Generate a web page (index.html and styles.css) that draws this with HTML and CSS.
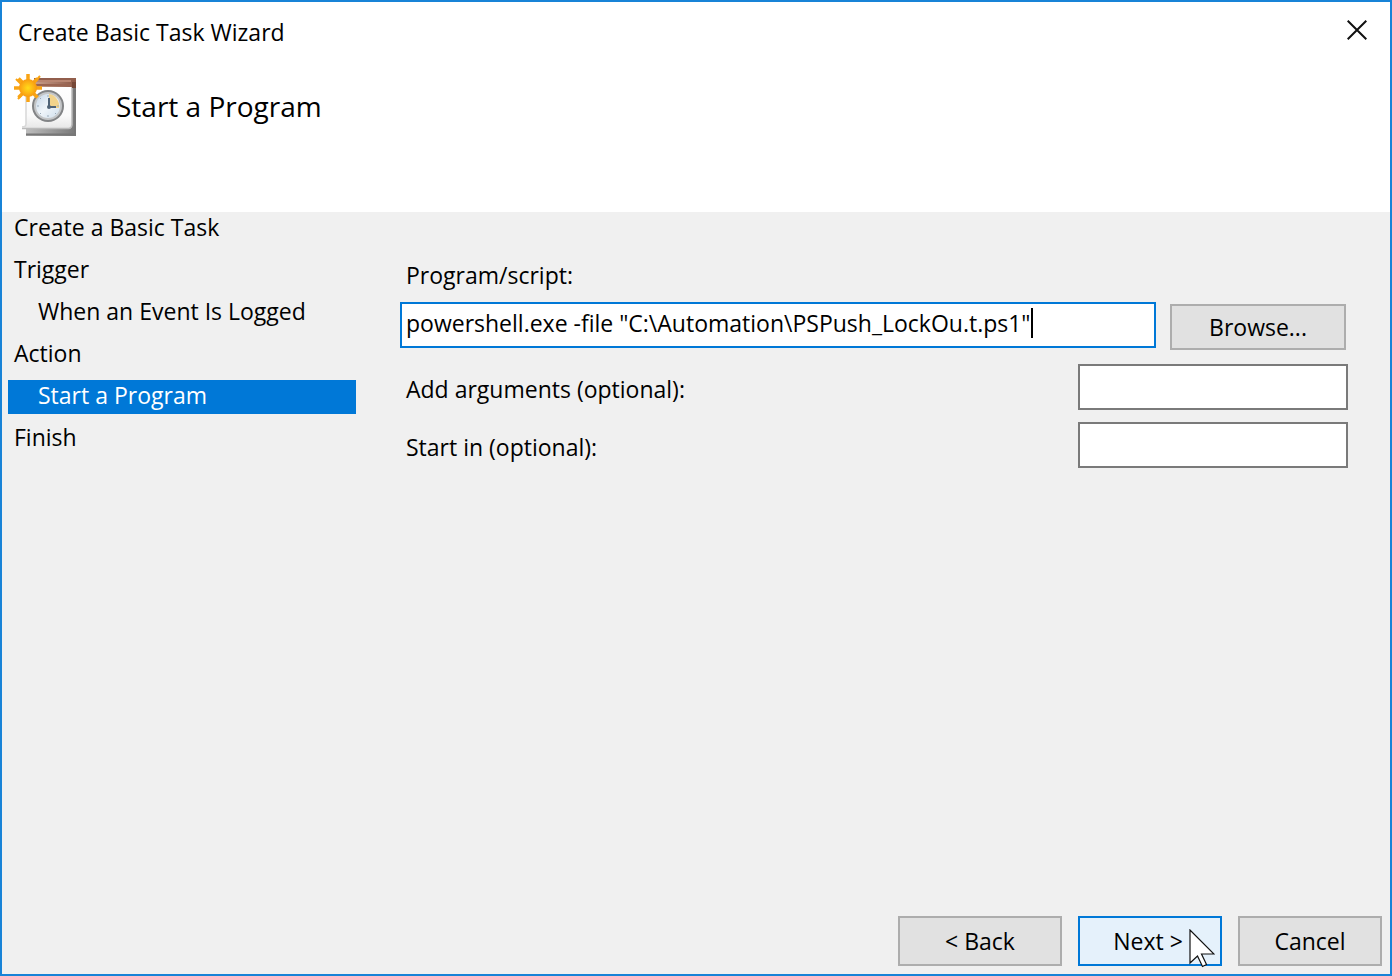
FILE: index.html
```html
<!DOCTYPE html>
<html lang="en">
<head>
<meta charset="utf-8">
<meta name="viewport" content="width=device-width, initial-scale=1">
<title>Create Basic Task Wizard</title>
<link rel="stylesheet" href="styles.css">
</head>
<body>
<div class="window">
  <header class="header">
    <div class="titlebar">
      <span class="window-title">Create Basic Task Wizard</span>
      <button class="close" type="button" aria-label="Close">
        <svg width="20" height="20" viewBox="0 0 20 20" aria-hidden="true"><path d="M.7.7l18.6 18.6M19.3.7L.7 19.3" stroke="#111" stroke-width="2" fill="none"/></svg>
      </button>
    </div>
    <div class="banner">
      <svg class="task-icon" width="64" height="64" viewBox="0 0 64 64" aria-hidden="true">
        <defs>
          <linearGradient id="paper" x1="0" y1="0" x2="0" y2="1"><stop offset="0" stop-color="#fff"/><stop offset=".7" stop-color="#fafafa"/><stop offset="1" stop-color="#e6e6e6"/></linearGradient>
          <linearGradient id="shade" x1="0" y1="0" x2="1" y2="0"><stop offset="0" stop-color="#bdbdbd"/><stop offset="1" stop-color="#787878"/></linearGradient>
          <linearGradient id="bar" x1="0" y1="0" x2="1" y2="0"><stop offset="0" stop-color="#c9a08c"/><stop offset="1" stop-color="#8b5746"/></linearGradient>
          <linearGradient id="face" x1="0" y1="0" x2="1" y2="1"><stop offset="0" stop-color="#c5d6e8"/><stop offset=".5" stop-color="#eff5fa"/><stop offset="1" stop-color="#cfdeeb"/></linearGradient>
          <radialGradient id="sun"><stop offset="0" stop-color="#ffdc19"/><stop offset=".6" stop-color="#fdb515"/><stop offset="1" stop-color="#f79a10"/></radialGradient>
        </defs>
        <path d="M12 56V10h50v52H12z" fill="url(#shade)"/>
        <path d="M12 60.500h50M61 10v52" stroke="#777" stroke-width="2"/>
        <path d="M12 11h46v40q0 3-3 4H8v-3h4z" fill="url(#paper)"/>
        <path d="M8 54.500h47q3-1 3-4V13" fill="none" stroke="#bbb" stroke-width="1.500"/>
        <path d="M12 12v38q0 3-4 3" fill="none" stroke="#d8d8d8" stroke-width="1.500"/>
        <path d="M20 4h42v9H20z" fill="url(#bar)"/>
        <path d="M20 5h42" stroke="#925e4c" stroke-width="2"/>
        <path d="M22 7h35" stroke="#b98672" stroke-width="2"/>
        <path d="M22 11h35" stroke="#9a6552" stroke-width="2"/>
        <path d="M58 8h4v6h-4z" fill="#754737"/>
        <circle cx="34" cy="32" r="16" fill="#828486"/>
        <circle cx="34" cy="32" r="14" fill="#c4c6c8"/>
        <circle cx="34" cy="32" r="12" fill="url(#face)"/>
        <path d="M35 20a12 12 0 0 1 10 14H35z" fill="#f2d38b"/>
        <path d="M34 21v2M34 41v2M23 32h2M43 32h2M26 24l1 1M26 40l1-1M42 40l-1-1" stroke="#9aabba"/>
        <path d="M35 24v9h7" fill="none" stroke="#4f6377" stroke-width="2"/>
        <circle cx="35" cy="33" r="2" fill="#4f6377"/>
        <path d="M14 0v28M0 14h28M4.500 4.500l19 19M23.500 4.500l-19 19" stroke="#f9a414" stroke-width="3.500"/>
        <path d="M26 2l-6 7M2 5l5 5M4 25l5-6" stroke="#f9a414" stroke-width="2"/>
        <circle cx="14" cy="14" r="9" fill="url(#sun)"/>
      </svg>
      <h1 class="heading">Start a Program</h1>
    </div>
  </header>
  <div class="content">
    <nav class="steps" aria-label="Wizard steps">
      <ol class="step-list">
        <li class="step">Create a Basic Task</li>
        <li class="step">Trigger</li>
        <li class="step step-sub">When an Event Is Logged</li>
        <li class="step">Action</li>
        <li class="step step-sub step-current" aria-current="step">Start a Program</li>
        <li class="step">Finish</li>
      </ol>
    </nav>
    <form class="form" id="task-form">
      <label class="label" for="program">Program/script:</label>
      <div class="program-row">
        <div class="program-box">
          <input class="program-input" id="program" type="text" spellcheck="false" value="powershell.exe -file &quot;C:\Automation\PSPush_LockOu.t.ps1&quot;">
          <span class="caret"></span>
        </div>
        <button class="button browse" type="button">Browse...</button>
      </div>
      <div class="option-row">
        <label class="label" for="arguments">Add arguments (optional):</label>
        <input class="option-input" id="arguments" type="text">
      </div>
      <div class="option-row">
        <label class="label" for="start-in">Start in (optional):</label>
        <input class="option-input" id="start-in" type="text">
      </div>
    </form>
  </div>
  <footer class="footer">
    <button class="button back" type="button">&lt; Back</button>
    <button class="button next" type="submit" form="task-form">Next &gt;
      <svg class="pointer" width="26" height="40" viewBox="0 0 26 40" aria-hidden="true"><path d="M1 1v33l7.500-7 5 10.500 4-2-5-10.500H25z" fill="#fff" stroke="#111" stroke-width="1.200"/></svg>
    </button>
    <button class="button cancel" type="button">Cancel</button>
  </footer>
</div>
</body>
</html>
```
FILE: styles.css
```css
* { box-sizing: border-box; }

body {
  margin: 0;
  background: #f0f0f0;
  color: #000;
  font-family: "Open Sans", "Noto Sans", sans-serif;
  font-size: 23px;
  line-height: 34px;
}

button, input { font: inherit; color: inherit; }

.window {
  display: flex;
  flex-direction: column;
  min-height: 100vh;
  border: 2px solid #1883d7;
  background: #f0f0f0;
}

.header {
  padding-bottom: 74px;
  background: #fff;
}

.titlebar {
  display: flex;
  align-items: center;
  justify-content: space-between;
  height: 60px;
  padding: 0 15px 0 16px;
}

.close {
  display: flex;
  align-items: center;
  justify-content: center;
  width: 36px;
  height: 36px;
  margin-bottom: 4px;
  padding: 0;
  border: 0;
  background: none;
}

.banner {
  display: flex;
  align-items: center;
  gap: 38px;
  margin-top: 12px;
  padding-left: 12px;
}

.heading {
  margin: 0;
  font-size: 28px;
  font-weight: 400;
}

.content {
  display: flex;
  flex: 1;
  gap: 44px;
  padding: 0 42px 0 6px;
}

.steps { flex: 0 0 348px; }

.step-list {
  display: grid;
  gap: 8px;
  margin: 0;
  padding: 0;
  list-style: none;
}

.step {
  padding: 0 0 4px 6px;
  line-height: 30px;
}

.step-sub { padding-left: 30px; }
.step-current { background: #0078d7; color: #fff; }

.form {
  display: flex;
  flex: 1;
  flex-direction: column;
  gap: 12px;
  min-width: 0;
  padding-top: 46px;
}

.label { padding-left: 6px; }

.program-row {
  display: flex;
  align-items: flex-end;
  gap: 14px;
  height: 48px;
  margin: -2px 0 2px;
  padding-right: 2px;
}

.program-box {
  display: flex;
  flex: 1;
  align-items: center;
  align-self: flex-start;
  min-width: 0;
  height: 46px;
  padding: 0 4px 4px;
  border: 2px solid #0078d7;
  background: #fff;
}

.program-input {
  field-sizing: content;
  min-width: 0;
  padding: 0;
  border: 0;
  outline: 0;
  background: none;
}

.caret {
  flex: none;
  width: 2px;
  height: 30px;
  background: #000;
}

.button {
  padding: 0;
  border: 2px solid #adadad;
  background: #e1e1e1;
}

.browse { width: 176px; height: 46px; }

.option-row {
  display: flex;
  align-items: center;
  justify-content: space-between;
}

.option-row .label { padding-top: 4px; }

.option-input {
  width: 270px;
  height: 46px;
  padding: 0 4px;
  border: 2px solid #7a7a7a;
  background: #fff;
}

.footer {
  display: flex;
  justify-content: flex-end;
  gap: 16px;
  padding: 8px;
}

.footer .button { height: 50px; }
.back { width: 164px; }
.next, .cancel { width: 144px; }

.next {
  position: relative;
  padding-right: 4px;
  border-color: #0078d7;
  background: #e5f1fb;
}

.pointer {
  position: absolute;
  right: 5px;
  top: 11px;
}
```
